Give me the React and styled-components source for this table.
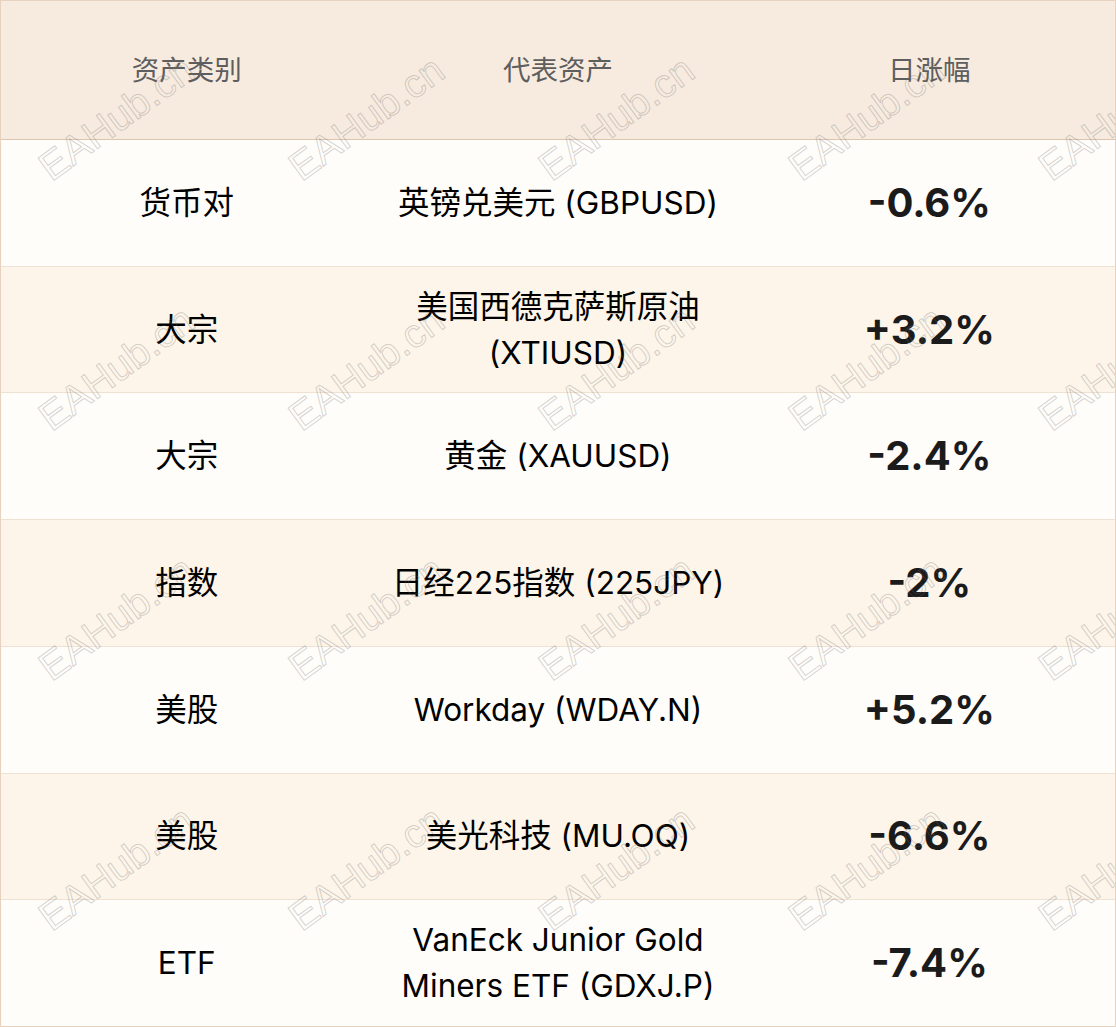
import React from "react";
import styled, { createGlobalStyle } from "styled-components";

const GlobalStyle = createGlobalStyle`
  html, body {
    margin: 0;
    padding: 0;
    background: #ffffff;
  }
  body {
    font-family: Inter, "Noto Sans CJK SC", sans-serif;
  }
`;

const Board = styled.div`
  position: relative;
  width: 1116px;
  height: 1027px;
  box-sizing: border-box;
  border: 1px solid #e6d2be;
  display: flex;
  flex-direction: column;
  overflow: hidden;
  background: #fffdfa;
`;

const Row = styled.div`
  display: grid;
  grid-template-columns: repeat(3, 1fr);
  align-items: center;
  box-sizing: border-box;
`;

const HeadRow = styled(Row)`
  height: 139px;
  flex: none;
  background: #f7ebdf;
  border-bottom: 1px solid #dcc5ae;
`;

const BodyRow = styled(Row)`
  flex: 1;
  background: ${(p) => (p.$alt ? "#fdf5ea" : "#fffdfa")};
  border-top: ${(p) => (p.$first ? "none" : "1px solid #f0e2d3")};
`;

const HeadCell = styled.div`
  text-align: center;
  font-size: 27.5px;
  color: #5e5e5e;
  line-height: 40px;
`;

const Cell = styled.div`
  text-align: center;
  font-size: 31.5px;
  line-height: 46px;
  color: #000000;
  padding: 0 12px;
`;

const Change = styled(Cell)`
  font-size: 40px;
  font-weight: 700;
  color: #1b1b1b;
`;

const Marks = styled.div`
  position: absolute;
  top: -64px;
  left: 54px;
  display: grid;
  grid-template-columns: repeat(5, 250px);
  grid-auto-rows: 250px;
  pointer-events: none;
`;

const MarkCell = styled.div`
  display: flex;
  align-items: flex-end;
`;

const Mark = styled.span`
  display: block;
  font-family: "Liberation Sans", Arial, sans-serif;
  font-size: 40px;
  line-height: 1;
  white-space: nowrap;
  color: transparent;
  -webkit-text-stroke: 1px rgba(110, 110, 110, 0.3);
  transform-origin: left bottom;
  transform: rotate(-36deg);
`;

const rows = [
  ["货币对", "英镑兑美元 (GBPUSD)", "-0.6%"],
  ["大宗", "美国西德克萨斯原油 (XTIUSD)", "+3.2%"],
  ["大宗", "黄金 (XAUUSD)", "-2.4%"],
  ["指数", "日经225指数 (225JPY)", "-2%"],
  ["美股", "Workday (WDAY.N)", "+5.2%"],
  ["美股", "美光科技 (MU.OQ)", "-6.6%"],
  ["ETF", "VanEck Junior Gold Miners ETF (GDXJ.P)", "-7.4%"],
];

export default function App() {
  return (
    <>
      <GlobalStyle />
      <Board>
        <HeadRow>
          <HeadCell>资产类别</HeadCell>
          <HeadCell>代表资产</HeadCell>
          <HeadCell>日涨幅</HeadCell>
        </HeadRow>
        {rows.map((r, i) => (
          <BodyRow key={i} $alt={i % 2 === 1} $first={i === 0}>
            <Cell>{r[0]}</Cell>
            <Cell>{r[1]}</Cell>
            <Change>{r[2]}</Change>
          </BodyRow>
        ))}
        <Marks>
          {Array.from({ length: 25 }).map((_, i) => (
            <MarkCell key={i}>
              <Mark>EAHub.cn</Mark>
            </MarkCell>
          ))}
        </Marks>
      </Board>
    </>
  );
}
